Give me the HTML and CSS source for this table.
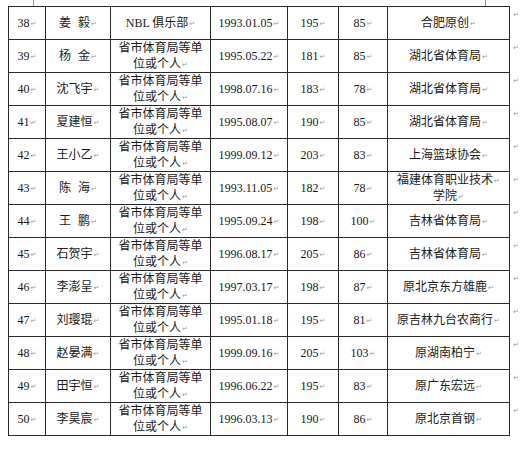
FILE: index.html
```html
<!DOCTYPE html>
<html lang="zh">
<head>
<meta charset="utf-8">
<link rel="stylesheet" href="styles.css">
</head>
<body>
<div class="marks"><span class="mark m1"></span><span class="mark m2"></span></div>
<table class="roster">
<colgroup>
<col class="c-no"><col class="c-name"><col class="c-unit"><col class="c-date"><col class="c-h"><col class="c-w"><col class="c-club"><col class="c-end">
</colgroup>
<tbody>
<tr><td>38<i class="r">↵</i></td><td>姜<span class="sp"></span>毅<i class="r">↵</i></td><td>NBL 俱乐部<i class="r">↵</i></td><td>1993.01.05<i class="r">↵</i></td><td>195<i class="r">↵</i></td><td>85<i class="r">↵</i></td><td>合肥原创<i class="r">↵</i></td><td class="end"><i class="r">↵</i></td></tr>
<tr><td>39<i class="r">↵</i></td><td>杨<span class="sp"></span>金<i class="r">↵</i></td><td>省市体育局等单<br>位或个人<i class="r">↵</i></td><td>1995.05.22<i class="r">↵</i></td><td>181<i class="r">↵</i></td><td>85<i class="r">↵</i></td><td>湖北省体育局<i class="r">↵</i></td><td class="end"><i class="r">↵</i></td></tr>
<tr><td>40<i class="r">↵</i></td><td>沈飞宇<i class="r">↵</i></td><td>省市体育局等单<br>位或个人<i class="r">↵</i></td><td>1998.07.16<i class="r">↵</i></td><td>183<i class="r">↵</i></td><td>78<i class="r">↵</i></td><td>湖北省体育局<i class="r">↵</i></td><td class="end"><i class="r">↵</i></td></tr>
<tr><td>41<i class="r">↵</i></td><td>夏建恒<i class="r">↵</i></td><td>省市体育局等单<br>位或个人<i class="r">↵</i></td><td>1995.08.07<i class="r">↵</i></td><td>190<i class="r">↵</i></td><td>85<i class="r">↵</i></td><td>湖北省体育局<i class="r">↵</i></td><td class="end"><i class="r">↵</i></td></tr>
<tr><td>42<i class="r">↵</i></td><td>王小乙<i class="r">↵</i></td><td>省市体育局等单<br>位或个人<i class="r">↵</i></td><td>1999.09.12<i class="r">↵</i></td><td>203<i class="r">↵</i></td><td>83<i class="r">↵</i></td><td>上海篮球协会<i class="r">↵</i></td><td class="end"><i class="r">↵</i></td></tr>
<tr><td>43<i class="r">↵</i></td><td>陈<span class="sp"></span>海<i class="r">↵</i></td><td>省市体育局等单<br>位或个人<i class="r">↵</i></td><td>1993.11.05<i class="r">↵</i></td><td>182<i class="r">↵</i></td><td>78<i class="r">↵</i></td><td>福建体育职业技术<i class="r">↵</i><br>学院<i class="r">↵</i></td><td class="end"><i class="r">↵</i></td></tr>
<tr><td>44<i class="r">↵</i></td><td>王<span class="sp"></span>鹏<i class="r">↵</i></td><td>省市体育局等单<br>位或个人<i class="r">↵</i></td><td>1995.09.24<i class="r">↵</i></td><td>198<i class="r">↵</i></td><td>100<i class="r">↵</i></td><td>吉林省体育局<i class="r">↵</i></td><td class="end"><i class="r">↵</i></td></tr>
<tr><td>45<i class="r">↵</i></td><td>石贺宇<i class="r">↵</i></td><td>省市体育局等单<br>位或个人<i class="r">↵</i></td><td>1996.08.17<i class="r">↵</i></td><td>205<i class="r">↵</i></td><td>86<i class="r">↵</i></td><td>吉林省体育局<i class="r">↵</i></td><td class="end"><i class="r">↵</i></td></tr>
<tr><td>46<i class="r">↵</i></td><td>李澎呈<i class="r">↵</i></td><td>省市体育局等单<br>位或个人<i class="r">↵</i></td><td>1997.03.17<i class="r">↵</i></td><td>198<i class="r">↵</i></td><td>87<i class="r">↵</i></td><td>原北京东方雄鹿<i class="r">↵</i></td><td class="end"><i class="r">↵</i></td></tr>
<tr><td>47<i class="r">↵</i></td><td>刘璎琨<i class="r">↵</i></td><td>省市体育局等单<br>位或个人<i class="r">↵</i></td><td>1995.01.18<i class="r">↵</i></td><td>195<i class="r">↵</i></td><td>81<i class="r">↵</i></td><td>原吉林九台农商行<i class="r">↵</i></td><td class="end"><i class="r">↵</i></td></tr>
<tr><td>48<i class="r">↵</i></td><td>赵晏满<i class="r">↵</i></td><td>省市体育局等单<br>位或个人<i class="r">↵</i></td><td>1999.09.16<i class="r">↵</i></td><td>205<i class="r">↵</i></td><td>103<i class="r">↵</i></td><td>原湖南柏宁<i class="r">↵</i></td><td class="end"><i class="r">↵</i></td></tr>
<tr><td>49<i class="r">↵</i></td><td>田宇恒<i class="r">↵</i></td><td>省市体育局等单<br>位或个人<i class="r">↵</i></td><td>1996.06.22<i class="r">↵</i></td><td>195<i class="r">↵</i></td><td>83<i class="r">↵</i></td><td>原广东宏远<i class="r">↵</i></td><td class="end"><i class="r">↵</i></td></tr>
<tr><td>50<i class="r">↵</i></td><td>李昊宸<i class="r">↵</i></td><td>省市体育局等单<br>位或个人<i class="r">↵</i></td><td>1996.03.13<i class="r">↵</i></td><td>190<i class="r">↵</i></td><td>86<i class="r">↵</i></td><td>原北京首钢<i class="r">↵</i></td><td class="end"><i class="r">↵</i></td></tr>
</tbody>
</table>
</body>
</html>
```
FILE: styles.css
```css
html, body {
  margin: 0;
  padding: 0;
  background: #fff;
}
body {
  font-family: "Liberation Serif", "Noto Sans CJK SC", serif;
  font-size: 12px;
  color: #1a1a1a;
}
.marks {
  height: 6px;
  display: flex;
}
.mark {
  display: block;
  width: 1px;
  height: 6px;
  background: #9a9a9a;
}
.m1 { margin-left: 33px; }
.m2 { margin-left: 451px; }
.roster {
  margin-left: 8px;
  border-collapse: collapse;
  table-layout: fixed;
}
.c-no { width: 37px; }
.c-name { width: 65px; }
.c-unit { width: 100px; }
.c-date { width: 77px; }
.c-h { width: 51px; }
.c-w { width: 49px; }
.c-club { width: 122px; }
.c-end { width: 12px; }
.roster tr {
  height: 33px;
}
.roster td {
  border: 1px solid #2a2a2a;
  height: 32px;
  box-sizing: border-box;
  padding: 0 2px;
  text-align: center;
  vertical-align: middle;
  line-height: 16px;
  white-space: nowrap;
}
.roster td.end {
  border: none;
  vertical-align: top;
  text-align: left;
  padding: 3px 0 0 2px;
  line-height: 8px;
}
.r {
  font-style: normal;
  font-family: "DejaVu Sans", sans-serif;
  font-size: 7px;
  line-height: 0;
  color: #9a9a9a;
  margin-left: 1px;
  vertical-align: 1px;
}
.sp {
  display: inline-block;
  width: 7px;
}
```
